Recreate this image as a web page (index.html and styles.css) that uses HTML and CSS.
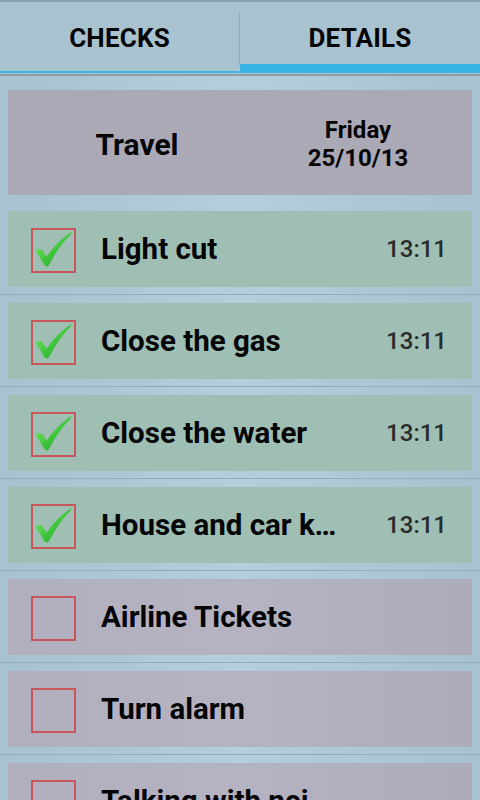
FILE: index.html
```html
<!DOCTYPE html>
<html>
<head>
<meta charset="utf-8">
<link rel="stylesheet" href="styles.css">
</head>
<body>
<div class="tabs">
  <div class="tab tab-checks">CHECKS</div>
  <div class="tab-sep"></div>
  <div class="tab tab-details">DETAILS</div>
</div>
<div class="header-wrap">
  <div class="header-card">
    <div class="title">Travel</div>
    <div class="date">Friday<br>25/10/13</div>
  </div>
</div>
<div class="list">
  <div class="item">
    <div class="card done">
      <div class="box"><svg class="check" viewBox="0 0 44 44"><use href="#chk"/></svg></div>
      <div class="label">Light cut</div>
      <div class="time">13:11</div>
    </div>
  </div>
  <div class="item">
    <div class="card done">
      <div class="box"><svg class="check" viewBox="0 0 44 44"><use href="#chk"/></svg></div>
      <div class="label">Close the gas</div>
      <div class="time">13:11</div>
    </div>
  </div>
  <div class="item">
    <div class="card done">
      <div class="box"><svg class="check" viewBox="0 0 44 44"><use href="#chk"/></svg></div>
      <div class="label">Close the water</div>
      <div class="time">13:11</div>
    </div>
  </div>
  <div class="item">
    <div class="card done">
      <div class="box"><svg class="check" viewBox="0 0 44 44"><use href="#chk"/></svg></div>
      <div class="label">House and car keys</div>
      <div class="time">13:11</div>
    </div>
  </div>
  <div class="item">
    <div class="card todo">
      <div class="box"></div>
      <div class="label">Airline Tickets</div>
    </div>
  </div>
  <div class="item">
    <div class="card todo">
      <div class="box"></div>
      <div class="label">Turn alarm</div>
    </div>
  </div>
  <div class="item">
    <div class="card todo">
      <div class="box"></div>
      <div class="label">Talking with neighbors</div>
    </div>
  </div>
</div>
<svg width="0" height="0" class="defs">
  <defs>
    <linearGradient id="g" x1="0" y1="0" x2="1" y2="1">
      <stop offset="0" stop-color="#8ef06e"/>
      <stop offset="0.55" stop-color="#3cc43a"/>
      <stop offset="1" stop-color="#1f9a26"/>
    </linearGradient>
    <path id="chk" d="M2.5 22.5 Q5.5 19 9.5 21 L14.5 28.5 Q25 13 40.5 2.5 Q41.5 3 40.5 4.5 Q28 17 17.5 37 Q15.5 40.5 12.5 38 Q8 30 2.5 22.5 Z" fill="url(#g)"/>
  </defs>
</svg>
</body>
</html>
```
FILE: styles.css
```css
html, body {
  margin: 0;
  padding: 0;
}
body {
  width: 480px;
  height: 800px;
  overflow: hidden;
  font-family: Roboto, "Noto Sans", sans-serif;
  background: linear-gradient(90deg, #a6c1cf 0%, #b3cfdc 50%, #a6c1cf 100%);
  color: #050505;
}
.defs {
  position: absolute;
}
.tabs {
  display: flex;
  background: #a8c2d0;
  border-top: 2px solid #8c9eaa;
  border-bottom: 2px solid #8e9ea9;
  padding-bottom: 1px;
}
.tab {
  box-sizing: border-box;
  height: 71px;
  padding-top: 21px;
  text-align: center;
  font-size: 26px;
  font-weight: 700;
  line-height: 30px;
  letter-spacing: 0.2px;
}
.tab-checks {
  width: 239px;
  border-bottom: 2px solid #38b4e5;
}
.tab-sep {
  width: 1px;
  height: 52px;
  margin-top: 10px;
  background: #93abb8;
}
.tab-details {
  flex: 1;
  border-bottom: 9px solid #38b4e5;
}
.header-wrap {
  padding: 14px 8px 16px;
}
.header-card {
  height: 105px;
  background: #aba9b6;
  display: flex;
  align-items: center;
}
.title {
  width: 258px;
  text-align: center;
  font-size: 30px;
  font-weight: 700;
  padding-top: 3px;
}
.date {
  width: 184px;
  text-align: center;
  font-size: 24px;
  font-weight: 700;
  line-height: 28px;
  padding-top: 2px;
}
.item {
  padding: 0 8px 7px;
  border-bottom: 1px solid #93adba;
  margin-bottom: 8px;
}
.card {
  height: 76px;
  display: flex;
  align-items: center;
  padding: 0 25px 0 23px;
}
.card.done {
  background: #9fbeb4;
}
.card.todo {
  background: linear-gradient(90deg, #b1afbe 0%, #b5b3c2 50%, #aeacbb 100%);
}
.box {
  flex: none;
  box-sizing: border-box;
  width: 45px;
  height: 45px;
  border: 2px solid #c9575a;
  margin-top: 2px;
  position: relative;
}
.check {
  position: absolute;
  left: 0;
  top: 0;
  width: 41px;
  height: 41px;
}
.label {
  flex: none;
  width: 238px;
  margin-left: 25px;
  font-size: 29.5px;
  font-weight: 700;
  white-space: nowrap;
  overflow: hidden;
  text-overflow: ellipsis;
}
.time {
  flex: none;
  margin-left: auto;
  font-size: 24px;
  font-weight: 500;
  color: #2b2b2b;
}
```
